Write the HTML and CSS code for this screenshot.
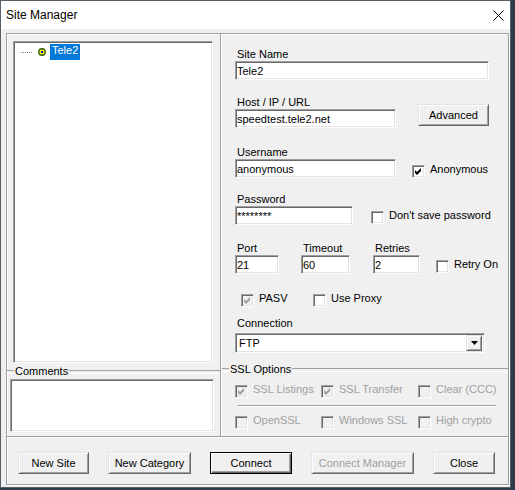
FILE: index.html
```html
<!DOCTYPE html>
<html lang="en">
<head>
    <meta charset="UTF-8">
    <title>Site Manager</title>
    <link rel="stylesheet" href="styles.css">
</head>
<body>
    <div class="window">
        <div class="titlebar">
            <span class="title">Site Manager</span>
            <span class="close">
                <svg width="11" height="11" viewBox="0 0 11 11"><path d="M0.5 0.5 L10.5 10.5 M10.5 0.5 L0.5 10.5" stroke="#000" stroke-width="1"/></svg>
            </span>
        </div>
        <div class="client">
            <div class="frame">
                <div class="panes">
                    <div class="pane pane-left">
                        <div class="tree">
                            <div class="tree-item">
                                <span class="tree-line"></span>
                                <svg class="site-icon" width="8" height="8" viewBox="0 0 8 8">
                                    <circle cx="4" cy="4" r="3.9" fill="#2f5a00"/>
                                    <circle cx="4" cy="4" r="3" fill="#7a9a10"/>
                                    <rect x="2" y="2" width="4" height="4" fill="#ffff00"/>
                                    <rect x="3" y="3" width="2" height="2" fill="#0000c8"/>
                                </svg>
                                <span class="tree-label">Tele2</span>
                            </div>
                        </div>
                        <div class="group">
                            <div class="group-head"><span>Comments</span></div>
                            <div class="memo"></div>
                        </div>
                    </div>

                    <div class="pane pane-right">
                        <div class="fields">
                            <div class="field-block">
                                <label class="caption">Site Name</label>
                                <input class="field site-name" type="text" value="Tele2">
                            </div>

                            <div class="row row-host">
                                <div class="field-block">
                                    <label class="caption">Host / IP / URL</label>
                                    <input class="field host" type="text" value="speedtest.tele2.net">
                                </div>
                                <button class="btn btn-advanced">Advanced</button>
                            </div>

                            <div class="row row-user">
                                <div class="field-block">
                                    <label class="caption">Username</label>
                                    <input class="field user" type="text" value="anonymous">
                                </div>
                                <div class="check check-anon">
                                    <span class="box"><svg width="9" height="9" viewBox="0 0 9 9"><polygon points="1,3 3,5 7,1 7,4 3,8 1,6" fill="#000"/></svg></span>
                                    <span>Anonymous</span>
                                </div>
                            </div>

                            <div class="row row-pass">
                                <div class="field-block">
                                    <label class="caption">Password</label>
                                    <input class="field pass" type="text" value="********">
                                </div>
                                <div class="check check-nosave">
                                    <span class="box"></span>
                                    <span>Don't save password</span>
                                </div>
                            </div>

                            <div class="row row-port">
                                <div class="field-block">
                                    <label class="caption">Port</label>
                                    <input class="field port" type="text" value="21">
                                </div>
                                <div class="field-block">
                                    <label class="caption">Timeout</label>
                                    <input class="field timeout" type="text" value="60">
                                </div>
                                <div class="field-block">
                                    <label class="caption">Retries</label>
                                    <input class="field retries" type="text" value="2">
                                </div>
                                <div class="check check-retry">
                                    <span class="box"></span>
                                    <span>Retry On</span>
                                </div>
                            </div>

                            <div class="row row-opts">
                                <div class="check check-pasv">
                                    <span class="box disabled"><svg width="9" height="9" viewBox="0 0 9 9"><polygon points="1,3 3,5 7,1 7,4 3,8 1,6" fill="#a0a0a0"/></svg></span>
                                    <span>PASV</span>
                                </div>
                                <div class="check">
                                    <span class="box"></span>
                                    <span>Use Proxy</span>
                                </div>
                            </div>

                            <label class="caption caption-conn">Connection</label>
                            <div class="select">
                                <span class="select-value">FTP</span>
                                <span class="select-btn">
                                    <svg width="7" height="4" viewBox="0 0 7 4"><polygon points="0,0 7,0 3.5,4" fill="#000"/></svg>
                                </span>
                            </div>
                        </div>

                        <div class="group group-ssl">
                            <div class="group-head"><span>SSL Options</span></div>
                            <div class="ssl-row">
                                <div class="check off">
                                    <span class="box disabled"><svg width="9" height="9" viewBox="0 0 9 9"><polygon points="1,3 3,5 7,1 7,4 3,8 1,6" fill="#a0a0a0"/></svg></span>
                                    <span>SSL Listings</span>
                                </div>
                                <div class="check off">
                                    <span class="box disabled"><svg width="9" height="9" viewBox="0 0 9 9"><polygon points="1,3 3,5 7,1 7,4 3,8 1,6" fill="#a0a0a0"/></svg></span>
                                    <span>SSL Transfer</span>
                                </div>
                                <div class="check off">
                                    <span class="box disabled"></span>
                                    <span>Clear (CCC)</span>
                                </div>
                            </div>
                            <div class="separator"></div>
                            <div class="ssl-row ssl-row-2">
                                <div class="check off">
                                    <span class="box disabled"></span>
                                    <span>OpenSSL</span>
                                </div>
                                <div class="check off">
                                    <span class="box disabled"></span>
                                    <span>Windows SSL</span>
                                </div>
                                <div class="check off">
                                    <span class="box disabled"></span>
                                    <span>High crypto</span>
                                </div>
                            </div>
                        </div>
                    </div>
                </div>

                <div class="buttons">
                    <button class="btn w-site">New Site</button>
                    <button class="btn w-cat">New Category</button>
                    <button class="btn btn-default w-connect">Connect</button>
                    <button class="btn w-manager" disabled>Connect Manager</button>
                    <button class="btn w-close">Close</button>
                </div>
            </div>
        </div>
    </div>
</body>
</html>
```

FILE: styles.css
```css
* {
    box-sizing: border-box;
}

body {
    margin: 0;
    background-color: #2e3b48;
    font-family: "Liberation Sans", Arial, sans-serif;
    font-size: 11px;
    color: #000;
}

.window {
    width: 511px;
    height: 488px;
    border: 1px solid #55606b;
    background-color: #f0f0f0;
    display: flex;
    flex-direction: column;
}

.titlebar {
    flex: none;
    height: 28px;
    background-color: #fff;
    display: flex;
    align-items: center;
    justify-content: space-between;
    padding: 0 6px 0 5px;
    font-size: 12px;
    line-height: 28px;
}

.close svg {
    display: block;
}

.client {
    flex: 1;
    padding: 4px 0 0 5px;
}

/* Etched outer frame */
.frame {
    width: 503px;
    height: 452px;
    border: 1px solid #a0a0a0;
    box-shadow: inset 1px 1px #fff, 1px 1px #fff;
    display: flex;
    flex-direction: column;
}

.panes {
    flex: none;
    height: 403px;
    display: grid;
    grid-template-columns: 214px 287px;
    border-bottom: 1px solid #a0a0a0;
}

.pane-left {
    border-right: 1px solid #a0a0a0;
    display: flex;
    flex-direction: column;
}

.pane-right {
    border-left: 1px solid #fff;
    padding-top: 14px;
}

/* Sunken boxes */
.tree,
.memo,
.field,
.select,
.box {
    border: 1px solid;
    border-color: #a0a0a0 #fff #fff #a0a0a0;
    box-shadow: inset 1px 1px #696969, inset -1px -1px #e3e3e3;
    background-color: #fff;
}

.tree {
    width: 200px;
    height: 322px;
    margin: 7px 0 0 6px;
    padding: 2px;
}

.tree-item {
    display: flex;
    align-items: center;
    height: 16px;
}

.tree-line {
    width: 11px;
    margin-left: 5px;
    border-top: 1px dotted #808080;
}

.site-icon {
    display: block;
    margin-left: 6px;
}

.tree-label {
    margin-left: 4px;
    background-color: #0078d7;
    color: #fff;
    line-height: 13px;
    padding: 0 2px 3px;
}

/* Group boxes */
.group {
    margin-top: 2px;
}

.group-head {
    display: flex;
    align-items: center;
    height: 13px;
    line-height: 13px;
}

.group-head::before,
.group-head::after {
    content: '';
    height: 2px;
    border-top: 1px solid #a0a0a0;
    border-bottom: 1px solid #fff;
}

.group-head::before {
    width: 7px;
}

.group-head::after {
    flex: 1;
}

.group-head span {
    padding: 0 1px;
}

.memo {
    width: 204px;
    height: 53px;
    margin: 1px 0 0 3px;
}

/* Right pane fields */
.fields {
    padding-left: 13px;
}

.caption {
    display: block;
    line-height: 13px;
    padding-left: 2px;
}

.field {
    display: block;
    height: 19px;
    padding: 0 0 0 1px;
    font: inherit;
    color: #000;
    outline: none;
}

.site-name { width: 254px; }
.host, .user { width: 161px; }
.pass { width: 118px; }
.port { width: 44px; }
.timeout { width: 49px; }
.retries { width: 47px; }

.row {
    display: flex;
    align-items: flex-start;
}

.row-host { margin-top: 16px; }
.row-user { margin-top: 18px; }
.row-pass { margin-top: 15px; }
.row-port { margin-top: 17px; }
.row-opts { margin-top: 18px; padding-left: 6px; }

.btn-advanced {
    width: 71px;
    height: 26px;
    margin: 8px 0 0 22px;
}

.check-anon { margin: 17px 0 0 16px; }
.check-nosave { margin: 16px 0 0 18px; }
.check-retry { margin: 16px 0 0 16px; }

.row-port .field-block + .field-block { margin-left: 22px; }
.row-port .field-block:nth-child(3) { margin-left: 23px; }

.check-pasv { width: 72px; }

/* Checkboxes */
.check {
    display: flex;
    align-items: flex-start;
    line-height: 13px;
    white-space: nowrap;
}

.box {
    flex: none;
    width: 13px;
    height: 13px;
    margin-top: 2px;
    display: flex;
    align-items: center;
    justify-content: center;
}

.box svg {
    display: block;
}

.box.disabled {
    background-color: #f0f0f0;
}

.check span + span {
    margin-left: 5px;
}

.check.off span + span {
    color: #a0a0a0;
}

/* Dropdown */
.caption-conn {
    margin-top: 10px;
}

.select {
    width: 250px;
    height: 20px;
    margin-top: 3px;
    display: flex;
    align-items: center;
    padding: 2px;
}

.select-value {
    flex: 1;
    padding-left: 1px;
    line-height: 13px;
}

.select-btn {
    width: 16px;
    height: 16px;
    background-color: #f0f0f0;
    border: 1px solid;
    border-color: #e3e3e3 #696969 #696969 #e3e3e3;
    box-shadow: inset 1px 1px #fff, inset -1px -1px #a0a0a0;
    display: flex;
    align-items: center;
    justify-content: center;
}

.select-btn svg {
    display: block;
}

/* SSL options */
.group-ssl {
    margin-top: 10px;
}

.ssl-row {
    display: grid;
    grid-template-columns: 86px 97px auto;
    padding-left: 13px;
    margin-top: 7px;
    overflow: hidden;
}

.ssl-row .check {
    overflow: hidden;
}

.separator {
    height: 2px;
    margin: 7px 12px 0 16px;
    border-top: 1px solid #a0a0a0;
    border-bottom: 1px solid #fff;
}

/* Buttons */
.btn {
    height: 22px;
    padding: 0;
    font: inherit;
    color: #000;
    background-color: #f0f0f0;
    border: 1px solid;
    border-color: #e3e3e3 #696969 #696969 #e3e3e3;
    box-shadow: inset 1px 1px #fff, inset -1px -1px #a0a0a0;
    border-radius: 0;
}

.btn:disabled {
    color: #a0a0a0;
}

.btn-default {
    border-color: #000;
    box-shadow: inset 1px 1px #fff, inset -1px -1px #696969, inset -2px -2px #a0a0a0;
}

.buttons {
    flex: 1;
    border-top: 1px solid #fff;
    display: flex;
    align-items: flex-start;
    gap: 19px;
    padding: 14px 0 0 11px;
}

.w-site { width: 71px; }
.w-cat { width: 83px; }
.w-connect { width: 82px; }
.w-manager { width: 103px; }
.w-close { width: 62px; }
```
